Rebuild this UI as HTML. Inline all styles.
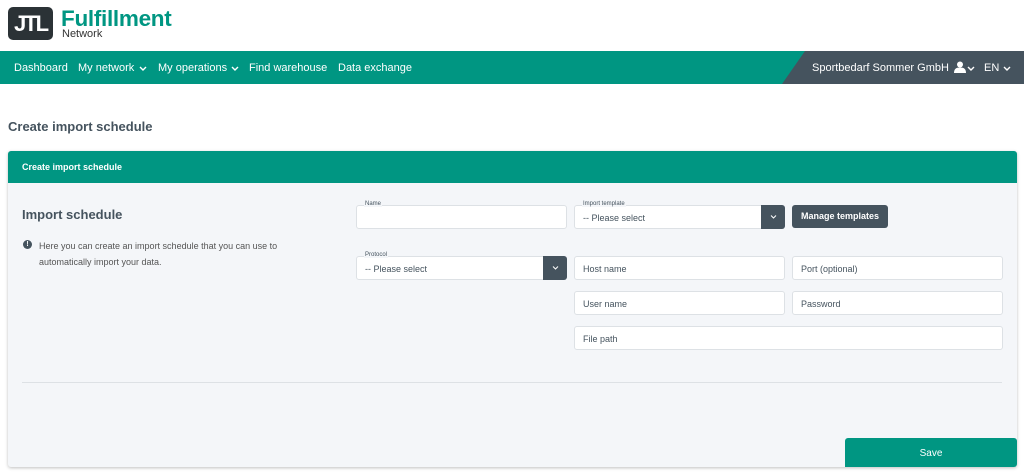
<!DOCTYPE html>
<html><head><meta charset="utf-8"><style>
*{box-sizing:border-box;margin:0;padding:0}
body{width:1024px;height:475px;background:#fff;font-family:"Liberation Sans",sans-serif;position:relative;overflow:hidden;color:#45535e}
.abs{position:absolute}
.logo{left:8px;top:7px;width:45px;height:33px;background:#2b3236;border-radius:5px;color:#fff;font-weight:bold;font-size:22px;letter-spacing:-2px;text-align:center;line-height:33px}
.brand{left:61px;top:6px;font-size:22.5px;font-weight:bold;color:#009682;letter-spacing:-0.3px}
.net{left:62px;top:28px;font-size:11px;color:#333}
.nav{left:0;top:51px;width:1024px;height:33px;background:#009682}
.navdark{left:0;top:51px;width:1024px;height:33px;background:#45535e;clip-path:polygon(805px 0,1024px 0,1024px 33px,782px 33px)}
.t{position:absolute;color:#fff;font-size:11px}
.chev{position:absolute}
h1{position:absolute;left:8px;top:119px;font-size:13px;font-weight:bold;color:#45535e}
.card{left:8px;top:151px;width:1009px;height:316px;background:#f4f6f9;border-radius:3px;box-shadow:0 1px 3px rgba(0,0,0,.25);overflow:hidden}
.ch{left:0;top:0;width:100%;height:32px;background:#009682;color:#fff;font-size:9px;font-weight:bold;padding:11px 0 0 14px}
.inp{position:absolute;background:#fff;border:1px solid #dde1e5;border-radius:3px;height:24px;font-size:9px;color:#45535e;padding:7px 0 0 8px}
.lbl{position:absolute;font-size:6px;color:#45535e;background:#f4f6f9;padding:0 1px}
.sel{position:absolute;right:-1px;top:-1px;width:24px;height:24px;background:#45535e;border-radius:0 3px 3px 0}
.btn{left:792px;top:205px;width:96px;height:23px;background:#45535e;border-radius:3px;color:#fff;font-size:9px;font-weight:bold;text-align:center;line-height:23px}
.save{left:845px;top:438px;width:172px;height:29px;background:#009682;color:#fff;font-size:10px;text-align:center;line-height:31px;border-radius:3px 3px 3px 0}
</style></head><body>
<div class="abs logo">JTL</div>
<div class="abs brand">Fulfillment</div>
<div class="abs net">Network</div>
<div class="abs nav"></div>
<div class="abs navdark"></div>
<span class="t" style="left:14px;top:62px">Dashboard</span>
<span class="t" style="left:78px;top:62px">My network</span>
<svg class="chev" style="left:139px;top:66px" width="8" height="5" viewBox="0 0 8 5"><path d="M1 1l3 3 3-3" stroke="#fff" stroke-width="1.4" fill="none"/></svg>
<span class="t" style="left:158px;top:62px">My operations</span>
<svg class="chev" style="left:231px;top:66px" width="8" height="5" viewBox="0 0 8 5"><path d="M1 1l3 3 3-3" stroke="#fff" stroke-width="1.4" fill="none"/></svg>
<span class="t" style="left:249px;top:62px">Find warehouse</span>
<span class="t" style="left:338px;top:62px">Data exchange</span>
<span class="t" style="left:812px;top:62px">Sportbedarf Sommer GmbH</span>
<svg class="abs" style="left:954px;top:61px" width="12" height="12" viewBox="0 0 12 12"><circle cx="6" cy="3.5" r="3" fill="#fff"/><path d="M0 12c0-4 2-5.5 6-5.5s6 1.5 6 5.5z" fill="#fff"/></svg>
<svg class="chev" style="left:967px;top:66px" width="8" height="5" viewBox="0 0 8 5"><path d="M1 1l3 3 3-3" stroke="#fff" stroke-width="1.4" fill="none"/></svg>
<span class="t" style="left:984px;top:62px">EN</span>
<svg class="chev" style="left:1003px;top:66px" width="8" height="5" viewBox="0 0 8 5"><path d="M1 1l3 3 3-3" stroke="#fff" stroke-width="1.4" fill="none"/></svg>
<h1>Create import schedule</h1>
<div class="abs card">
<div class="abs ch">Create import schedule</div>
<div class="abs" style="left:14px;top:56px;font-size:13px;font-weight:bold">Import schedule</div>
<div class="abs" style="left:15px;top:89px;width:9px;height:9px;border-radius:50%;background:#45535e;color:#fff;font-size:7px;font-weight:bold;text-align:center;line-height:9px">!</div>
<div class="abs" style="left:31px;top:87px;font-size:9px;line-height:16px;color:#555">Here you can create an import schedule that you can use to<br>automatically import your data.</div>
<div class="abs" style="left:14px;top:231px;width:980px;height:1px;background:#dde1e5"></div>
</div>
<div class="inp" style="left:356px;top:205px;width:211px"></div><span class="lbl" style="left:364px;top:201px">Name</span>
<div class="inp" style="left:574px;top:205px;width:211px">-- Please select<div class="sel"><svg style="position:absolute;left:9px;top:10px" width="7" height="4" viewBox="0 0 7 4"><path d="M1 .5l2.5 2.5 2.5-2.5" stroke="#fff" stroke-width="1" fill="none"/></svg></div></div><span class="lbl" style="left:582px;top:201px">Import template</span>
<div class="abs btn">Manage templates</div>
<div class="inp" style="left:356px;top:256px;width:211px">-- Please select<div class="sel"><svg style="position:absolute;left:9px;top:10px" width="7" height="4" viewBox="0 0 7 4"><path d="M1 .5l2.5 2.5 2.5-2.5" stroke="#fff" stroke-width="1" fill="none"/></svg></div></div><span class="lbl" style="left:364px;top:252px">Protocol</span>
<div class="inp" style="left:574px;top:256px;width:211px">Host name</div>
<div class="inp" style="left:792px;top:256px;width:211px">Port (optional)</div>
<div class="inp" style="left:574px;top:291px;width:211px">User name</div>
<div class="inp" style="left:792px;top:291px;width:211px">Password</div>
<div class="inp" style="left:574px;top:326px;width:429px">File path</div>
<div class="abs save">Save</div>
</body></html>
